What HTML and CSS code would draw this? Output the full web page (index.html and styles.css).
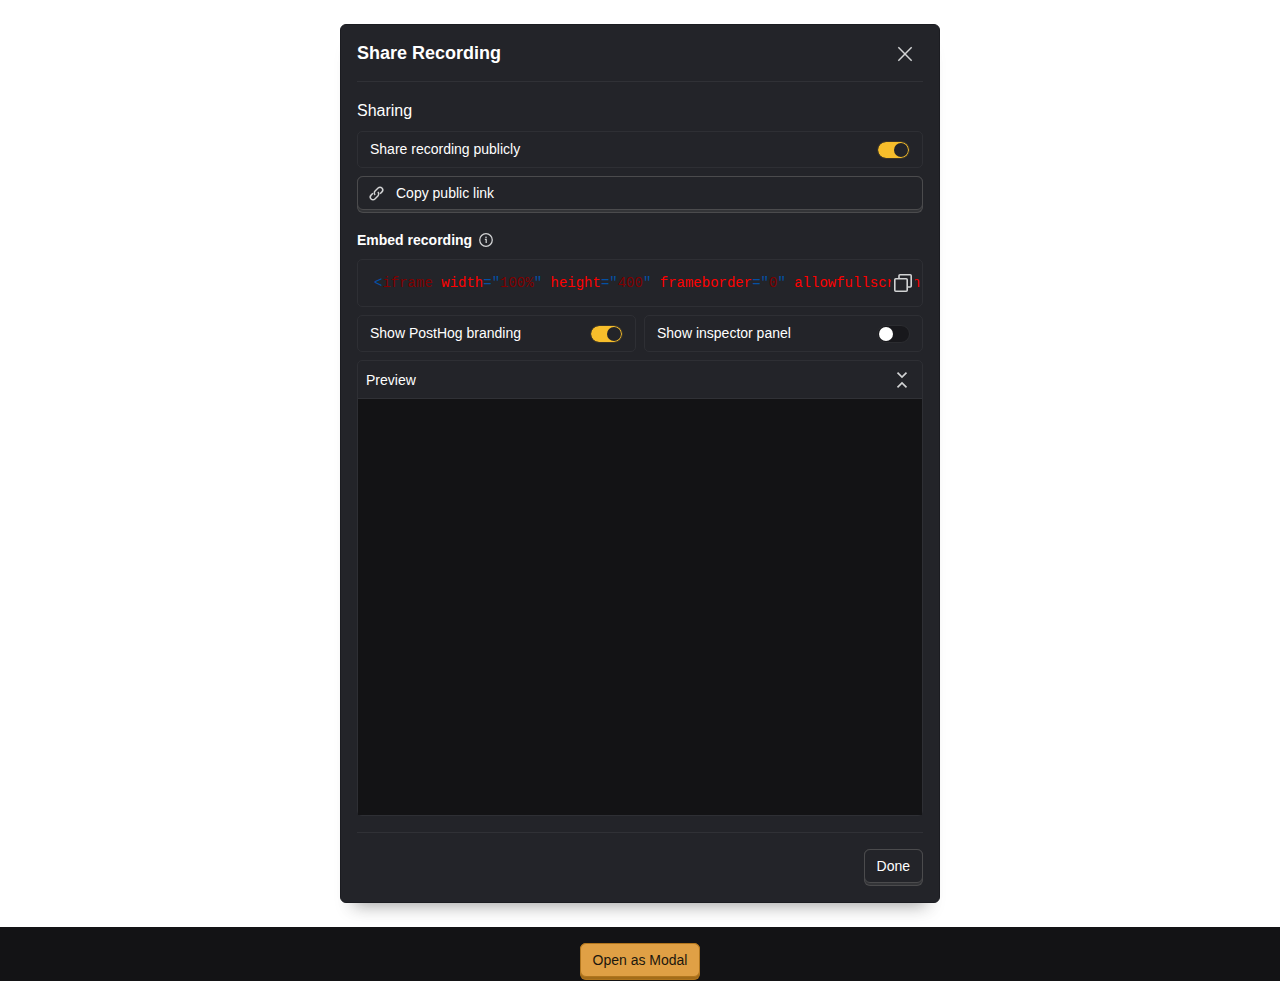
FILE: index.html
```html
<!DOCTYPE html>
<html lang="en">
<head>
<meta charset="utf-8">
<title>Share Recording</title>
<link rel="stylesheet" href="styles.css">
</head>
<body>
<div class="stage">
  <section class="modal">
    <header class="modal-header">
      <h3 class="modal-title">Share Recording</h3>
      <svg class="close" viewBox="0 0 24 24"><path d="M4 4 20 20M20 4 4 20"/></svg>
    </header>
    <div class="modal-content">
      <h4 class="sharing">Sharing</h4>
      <div class="row">
        <span>Share recording publicly</span>
        <span class="switch on"><i class="knob"></i></span>
      </div>
      <button class="button wide"><span class="face">
        <svg class="link" viewBox="0 0 24 24"><g transform="translate(12 12) rotate(-45)"><path d="M3.4 3.8H7a3.8 3.8 0 0 0 0-7.6H1A3.8 3.8 0 0 0-2.8 0M-3.4-3.8H-7a3.8 3.8 0 0 0 0 7.6H-1A3.8 3.8 0 0 0 2.8 0"/></g></svg>
        <span>Copy public link</span></span></button>
      <h5 class="embed">Embed recording
        <svg class="info" viewBox="0 0 24 24"><circle cx="12" cy="12" r="9.4"/><path d="M10.3 11h2v5.5"/><circle class="dot" cx="12" cy="8" r="1.2"/></svg>
      </h5>
      <div class="code">
        <pre><b class="p">&lt;</b><b class="v">iframe</b> width<b class="p">="</b><b class="v">100%</b><b class="p">"</b> height<b class="p">="</b><b class="v">400</b><b class="p">"</b> frameborder<b class="p">="</b><b class="v">0</b><b class="p">"</b> allowfullscreen</pre>
        <svg class="copy" viewBox="0 0 24 24"><path d="M8 7.6V4.8a1 1 0 0 1 1-1h10.2a1 1 0 0 1 1 1v10.2a1 1 0 0 1-1 1h-2.6"/><rect x="3.8" y="7.8" width="12.4" height="12.4" rx="1"/></svg>
      </div>
      <div class="options">
        <div class="row"><span>Show PostHog branding</span><span class="switch on"><i class="knob"></i></span></div>
        <div class="row"><span>Show inspector panel</span><span class="switch"><i class="knob"></i></span></div>
      </div>
      <div class="preview">
        <div class="preview-header">Preview
          <svg class="collapse" viewBox="0 0 24 24"><path d="m6 2.2 6 5.8 6-5.8M6 21.8l6-5.8 6 5.8"/></svg>
        </div>
        <div class="frame"></div>
      </div>
    </div>
    <footer class="modal-footer"><button class="button"><span class="face">Done</span></button></footer>
  </section>
</div>
<div class="bar"><button class="button primary"><span class="face">Open as Modal</span></button></div>
</body>
</html>
```
FILE: styles.css
```css
* { box-sizing: border-box; }
body { margin: 0; height: 981px; overflow: hidden; background: #131315; color: #fff; font: 14px/20px "Liberation Sans", Arial, sans-serif; }
h3, h4, h5, pre { margin: 0; }
svg { flex: none; fill: none; stroke: #d2d3d4; stroke-width: 2; }
.stage { height: 927px; padding: 24px 0; background: #fff; display: flex; justify-content: center; overflow: hidden; }
.modal { width: 600px; height: 879px; padding: 0 16px; background: #232429; border: 1px solid #1b1c21; border-radius: 6px; box-shadow: 0 16px 16px -16px rgba(0, 0, 0, .35), 0 16px 16px -8px rgba(0, 0, 0, .08); }
.modal-header { display: flex; justify-content: space-between; height: 57px; padding: 14px 8px 0 0; border-bottom: 1px solid #303136; }
.modal-title { font-size: 18px; line-height: 28px; }
.close { width: 20px; height: 20px; margin-top: 5px; stroke-width: 1.8; }
.modal-content { display: flex; flex-direction: column; height: 751px; padding: 17px 0 16px; border-bottom: 1px solid #303136; }
.sharing { height: 32px; font-size: 16px; line-height: 24px; font-weight: 400; }
.row { display: flex; align-items: center; justify-content: space-between; flex: none; height: 37px; padding: 0 12px; border: 1px solid #2e2f34; border-radius: 5px; }
.row > span:first-child { margin-top: -1px; }
.switch { display: flex; align-items: center; width: 33px; height: 18px; padding: 0 1px; border: 1px solid #2b2c30; border-radius: 9px; background: #18181c; }
.switch.on { justify-content: flex-end; background: #f7be2b; background-clip: padding-box; border-color: #3c3526; }
.knob { width: 14px; height: 14px; border-radius: 50%; background: #fff; }
.switch.on .knob { background: #232429; }
.button { flex: none; height: 37px; padding: 0; border: 1px solid #4b4b4d; border-top: 0; border-radius: 6px; background: #333437; color: #fff; font: inherit; }
.face { display: flex; align-items: center; height: 34px; margin: 0 -1px 2px; padding: 0 12px; border: 1px solid #4b4b4d; border-radius: 6px; background: #232429; }
.wide { margin-top: 8px; text-align: left; }
.wide .face { padding-left: 10px; }
.link { width: 17px; height: 17px; margin-right: 11px; stroke-width: 2.1; }
.embed { display: flex; align-items: center; gap: 6px; height: 20px; margin: 17px 0 9px; font-size: 14px; }
.info { width: 16px; height: 16px; stroke-width: 1.9; }
.info .dot { fill: #d2d3d4; stroke: none; }
.code { position: relative; flex: none; height: 48px; margin-bottom: 8px; padding: 13px 2px 0 16px; border: 1px solid #2e2f34; border-radius: 5px; }
.code pre { overflow: hidden; color: #f00; font: 14px/20px "Liberation Mono", monospace; }
.code b { font-weight: 400; }
.code .p { color: #0451a5; }
.code .v { color: #800000; }
.copy { position: absolute; right: 7px; top: 11px; width: 24px; height: 24px; background: #232429; stroke-width: 1.6; }
.options { display: grid; grid-template-columns: 1fr 1fr; gap: 8px; }
.preview { flex: none; height: 456px; margin-top: 8px; border: 1px solid #2e2f34; border-radius: 5px; }
.preview-header { display: flex; align-items: center; justify-content: space-between; height: 38px; padding: 0 12px 0 8px; border-bottom: 1px solid #303136; }
.collapse { width: 18px; height: 18px; margin-right: -1px; stroke-width: 2.2; }
.frame { height: 416px; background: #131315; }
.modal-footer { display: flex; justify-content: flex-end; padding-top: 16px; }
.bar { display: flex; justify-content: center; padding-top: 16px; }
.primary { background: #a36d1b; border-color: #b1751d; color: #1c170d; }
.primary .face { background: #e0a045; border-color: #b1751d; }
```
